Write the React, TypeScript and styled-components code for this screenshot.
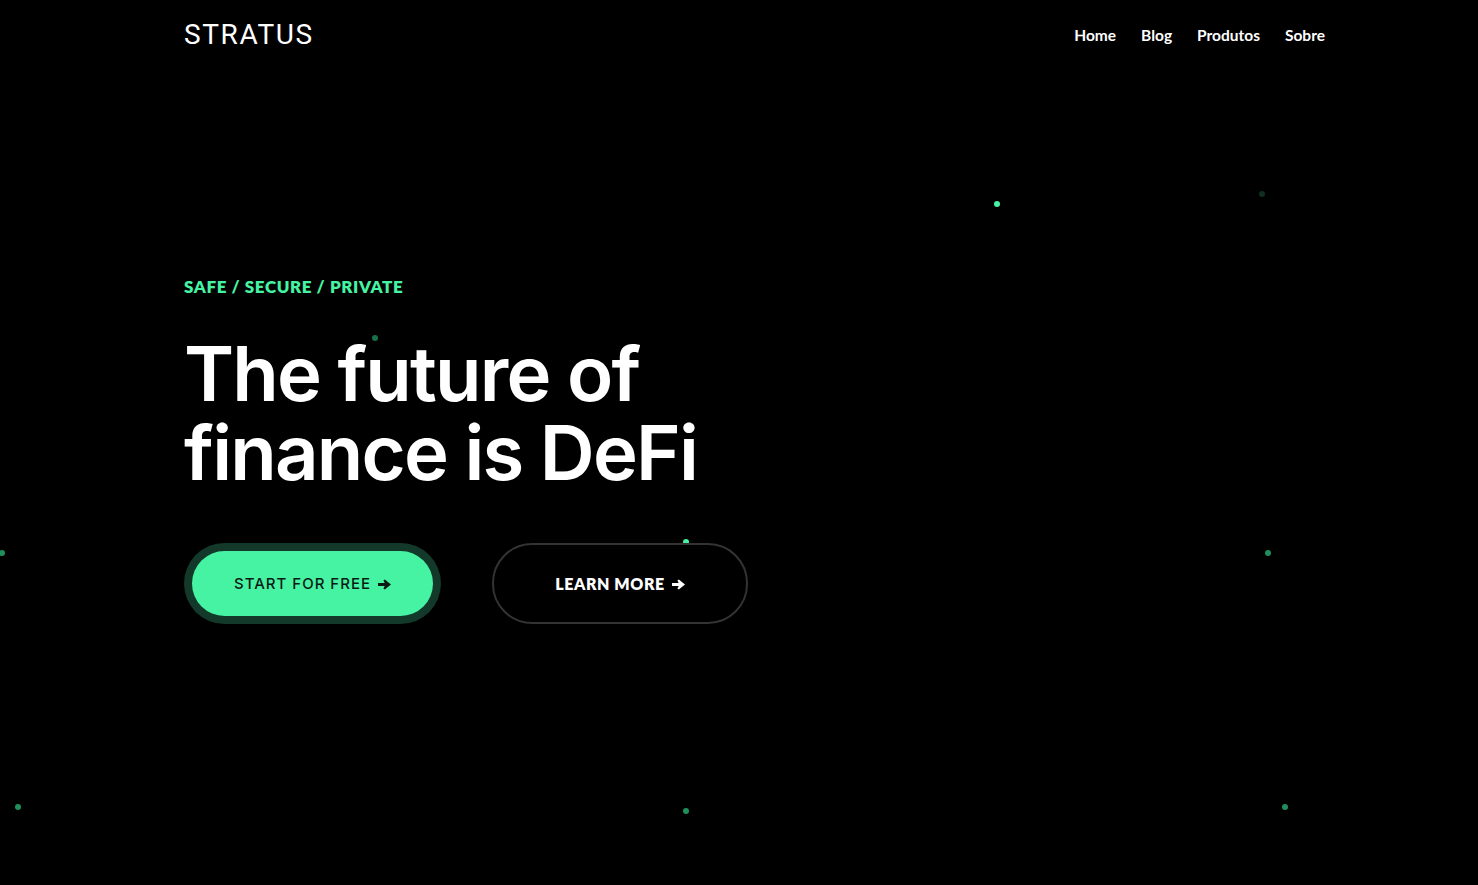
import styled, { createGlobalStyle } from "styled-components";

const GlobalStyle = createGlobalStyle`
  html, body {
    margin: 0;
    padding: 0;
    background: #000;
  }
  body {
    font-family: "Inter", "Liberation Sans", sans-serif;
    color: #fff;
  }
`;

type Dot = { x: number; y: number; tone: "bright" | "mid" | "dim" | "faint" };

const dots: Dot[] = [
  { x: 997, y: 204, tone: "bright" },
  { x: 1262, y: 194, tone: "faint" },
  { x: 375, y: 338, tone: "dim" },
  { x: 686, y: 542, tone: "bright" },
  { x: 2, y: 553, tone: "mid" },
  { x: 1268, y: 553, tone: "mid" },
  { x: 18, y: 807, tone: "mid" },
  { x: 686, y: 811, tone: "mid" },
  { x: 1285, y: 807, tone: "mid" },
];

const toneColor = {
  bright: "#45f3a3",
  mid: "#1f8f5c",
  dim: "#167049",
  faint: "#0f2f21",
};

function ArrowIcon() {
  return (
    <ArrowSvg viewBox="0 0 12 10" aria-hidden="true">
      <path d="M0 3.7h6.2L5 1.2 6.3 0.4 12 5l-5.7 4.6L5 8.8l1.2-2.5H0z" fill="currentColor" />
    </ArrowSvg>
  );
}

export default function App() {
  return (
    <>
      <GlobalStyle />
      <Page>
        <Particles>
          {dots.map((d, i) => (
            <Particle key={i} tone={d.tone} style={{ left: d.x - 3, top: d.y - 3 }} />
          ))}
        </Particles>
        <Header>
          <Logo>STRATUS</Logo>
          <Nav>
            <NavLink href="#">Home</NavLink>
            <NavLink href="#">Blog</NavLink>
            <NavLink href="#">Produtos</NavLink>
            <NavLink href="#">Sobre</NavLink>
          </Nav>
        </Header>
        <Hero>
          <Tagline>SAFE / SECURE / PRIVATE</Tagline>
          <Title>
            The future of
            <br />
            finance is DeFi
          </Title>
          <Actions>
            <PrimaryRing>
              <PrimaryButton>
                START FOR FREE <ArrowIcon />
              </PrimaryButton>
            </PrimaryRing>
            <OutlineButton>
              LEARN MORE <ArrowIcon />
            </OutlineButton>
          </Actions>
        </Hero>
      </Page>
    </>
  );
}

const Page = styled.div`
  position: relative;
  width: 100%;
  height: 885px;
  overflow: hidden;
  background: #000;
  padding: 0 153px 0 184px;
  box-sizing: border-box;
`;

const Particles = styled.div`
  position: absolute;
  inset: 0;
  pointer-events: none;
`;

const Particle = styled.span<{ tone: Dot["tone"] }>`
  position: absolute;
  width: 6px;
  height: 6px;
  border-radius: 50%;
  background: ${(p) => toneColor[p.tone]};
`;

const Header = styled.header`
  position: relative;
  display: flex;
  justify-content: space-between;
  align-items: center;
  height: 70px;
`;

const Logo = styled.div`
  font-family: "Roboto", "Liberation Sans", sans-serif;
  font-size: 28px;
  font-weight: 400;
  letter-spacing: 1.6px;
  margin-top: -2px;
`;

const Nav = styled.nav`
  display: flex;
  gap: 25px;
`;

const NavLink = styled.a`
  font-family: "Lato", "Noto Sans", sans-serif;
  font-size: 15.5px;
  font-weight: 700;
  color: #fff;
  text-decoration: none;
`;

const Hero = styled.section`
  position: relative;
  padding-top: 205px;
`;

const Tagline = styled.div`
  font-family: "Lato", "Noto Sans", sans-serif;
  font-size: 17px;
  font-weight: 800;
  letter-spacing: 0.6px;
  color: #45f3a3;
  line-height: 24px;
`;

const Title = styled.h1`
  margin: 35px 0 0;
  font-family: "Inter", "Liberation Sans", sans-serif;
  font-size: 76px;
  font-weight: 600;
  line-height: 79px;
  letter-spacing: -1.8px;
`;

const Actions = styled.div`
  display: flex;
  align-items: center;
  gap: 51px;
  margin-top: 51px;
`;

const PrimaryRing = styled.div`
  display: flex;
  padding: 8px;
  border-radius: 48px;
  background: #12392a;
`;

const ButtonBase = styled.button`
  display: flex;
  align-items: center;
  justify-content: center;
  gap: 7px;
  font-size: 15px;
  letter-spacing: 1px;
  border-radius: 40px;
  cursor: pointer;
`;

const ArrowSvg = styled.svg`
  width: 13px;
  height: 11px;
  margin-top: 1px;
`;

const PrimaryButton = styled(ButtonBase)`
  width: 241px;
  height: 65px;
  border: none;
  background: #45f3a3;
  color: #0b1a13;
  font-family: "Inter", "Liberation Sans", sans-serif;
  font-weight: 500;
`;

const OutlineButton = styled(ButtonBase)`
  width: 256px;
  height: 81px;
  border: 2px solid #333;
  background: transparent;
  color: #fff;
  font-family: "Lato", "Noto Sans", sans-serif;
  font-weight: 800;
  font-size: 16px;
  letter-spacing: 0.6px;
`;
